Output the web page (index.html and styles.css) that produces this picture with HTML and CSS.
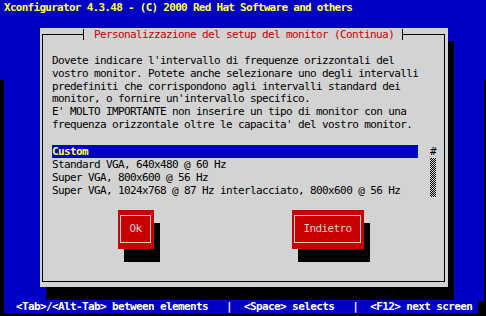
FILE: index.html
```html
<!DOCTYPE html>
<html lang="it">
<head>
    <meta charset="UTF-8">
    <title>Xconfigurator</title>
    <link rel="stylesheet" href="styles.css">
</head>
<body>
    <div class="screen">
        <div class="titlebar">Xconfigurator 4.3.48 - (C) 2000 Red Hat Software and others</div>

        <div class="window">
            <div class="frame">
                <div class="frame-title">Personalizzazione del setup del monitor (Continua)</div>

                <p class="message">Dovete indicare l'intervallo di frequenze orizzontali del
vostro monitor. Potete anche selezionare uno degli intervalli
predefiniti che corrispondono agli intervalli standard dei
monitor, o fornire un'intervallo specifico.
E' MOLTO IMPORTANTE non inserire un tipo di monitor con una
frequenza orizzontale oltre le capacita' del vostro monitor.</p>

                <div class="listbox">
                    <ul class="list">
                        <li class="selected">Custom</li>
                        <li>Standard VGA, 640x480 @ 60 Hz</li>
                        <li>Super VGA, 800x600 @ 56 Hz</li>
                        <li>Super VGA, 1024x768 @ 87 Hz interlacciato, 800x600 @ 56 Hz</li>
                    </ul>
                    <div class="scrollbar">
                        <span class="thumb">#</span>
                        <span class="track"></span>
                    </div>
                </div>

                <div class="buttons">
                    <div class="button ok"><span>Ok</span></div>
                    <div class="button back"><span>Indietro</span></div>
                </div>
            </div>
        </div>

        <div class="statusbar">
            <span class="status">  &lt;Tab&gt;/&lt;Alt-Tab&gt; between elements   |  &lt;Space&gt; selects   |  &lt;F12&gt; next screen</span>
        </div>
    </div>
</body>
</html>
```

FILE: styles.css
```css
body {
    margin: 0;
    height: 316px;
    overflow: hidden;
    background: linear-gradient(#0000c4 0 80px, #000 80px);
    font-family: "DejaVu Sans Mono", monospace;
    font-size: 11px;
    letter-spacing: -0.62px;
    color: #000;
}

.screen {
    margin-left: 4px;
    width: 480px;
    height: 313px;
    background-color: #0000c4;
    display: flex;
    flex-direction: column;
}

.titlebar {
    height: 14px;
    box-sizing: border-box;
    padding-top: 2px;
    line-height: 12px;
    color: #ffff44;
    font-weight: bold;
    letter-spacing: -0.72px;
    white-space: pre;
}

.window {
    margin: 14px 0 0 36px;
    width: 408px;
    height: 259px;
    box-sizing: border-box;
    padding: 6px 3px 5px 2px;
    background-color: #d3d3d3;
    box-shadow: 6px 13px 0 #000;
    display: flex;
}

.frame {
    flex: 1;
    border: 1px solid #000;
    padding-left: 9px;
    display: flex;
    flex-direction: column;
}

.frame-title {
    align-self: flex-start;
    margin: -6px 0 0 31px;
    height: 11px;
    line-height: 11px;
    padding: 0 8px 0 10px;
    border-left: 1px solid #000;
    border-right: 1px solid #000;
    background-color: #d3d3d3;
    color: #c80000;
    white-space: pre;
}

.message {
    margin: 15px 0 0;
    line-height: 12.8px;
    white-space: pre;
}

.listbox {
    display: flex;
    margin-top: 13px;
    line-height: 13px;
}

.list {
    width: 366px;
    margin: 0;
    padding: 0;
    list-style: none;
}

.list li {
    height: 13px;
    white-space: pre;
}

.list .selected {
    background-color: #0000c4;
    color: #ffff44;
    font-weight: bold;
}

.scrollbar {
    margin-left: 12px;
    width: 6px;
    display: flex;
    flex-direction: column;
}

.thumb {
    height: 13px;
    text-align: center;
}

.track {
    height: 39px;
    background: repeating-conic-gradient(#000 0 25%, transparent 0 50%) 0 0 / 2px 2px;
}

.buttons {
    display: flex;
    margin-top: 13px;
    padding-left: 66px;
}

.button {
    height: 39px;
    box-sizing: border-box;
    padding: 5px 3px 6px 2px;
    background-color: #c80000;
    box-shadow: 6px 13px 0 #000;
    color: #d3d3d3;
    display: flex;
}

.button span {
    flex: 1;
    border: 1px solid #d3d3d3;
    display: flex;
    align-items: center;
    justify-content: center;
}

.ok {
    width: 36px;
}

.back {
    width: 72px;
    margin-left: 138px;
}

.statusbar {
    margin-top: auto;
    height: 12px;
    background-color: #000;
}

.status {
    display: block;
    width: 474px;
    height: 12px;
    line-height: 12px;
    background-color: #0000c4;
    color: #fff;
    font-weight: bold;
    white-space: pre;
}
```
